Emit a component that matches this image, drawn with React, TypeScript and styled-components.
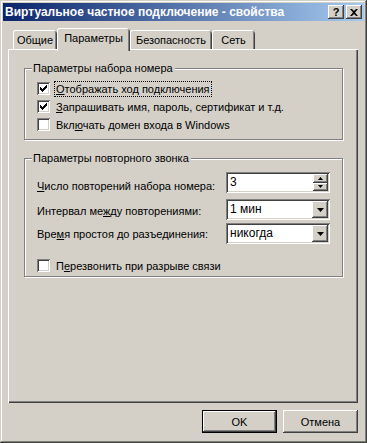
import styled, { createGlobalStyle } from 'styled-components'

const face = '#d4d0c8'
const light = '#ffffff'
const shadow = '#808080'
const dark = '#404040'

const raised = `
	box-shadow: inset -1px -1px ${dark}, inset 1px 1px ${light}, inset -2px -2px ${shadow}, inset 2px 2px ${face};
`
const sunken = `
	box-shadow: inset 1px 1px ${shadow}, inset -1px -1px ${light}, inset 2px 2px ${dark}, inset -2px -2px ${face};
`

const GlobalStyle = createGlobalStyle`
	html, body {
		margin: 0;
		padding: 0;
		background: ${face};
	}
	body {
		font-family: "Liberation Sans", Arial, sans-serif;
		font-size: 11px;
		color: #000;
	}
`

const Window = styled.div`
	width: 367px;
	height: 443px;
	box-sizing: border-box;
	padding: 3px;
	background: ${face};
	box-shadow: inset -1px -1px ${dark}, inset 1px 1px ${face}, inset -2px -2px ${shadow}, inset 2px 2px ${light};
	display: flex;
	flex-direction: column;
`

const TitleBar = styled.div`
	height: 18px;
	display: flex;
	align-items: center;
	padding: 0 2px 0 2px;
	background: linear-gradient(to right, #0a246a, #a6caf0);
`

const TitleText = styled.div`
	flex: 1;
	color: #fff;
	font-weight: bold;
	font-size: 12px;
	white-space: nowrap;
`

const CaptionButton = styled.div<{ $gap?: number }>`
	width: 16px;
	height: 14px;
	box-sizing: border-box;
	margin-left: ${p => p.$gap ?? 0}px;
	background: ${face};
	${raised}
	display: flex;
	align-items: center;
	justify-content: center;
	font-weight: bold;
	font-size: 11px;
	line-height: 14px;
`

const Body = styled.div`
	padding: 7px 6px 0 5px;
	display: flex;
	flex-direction: column;
`

const TabRow = styled.div`
	height: 21px;
	display: flex;
	align-items: flex-end;
	padding-left: 5px;
	position: relative;
	z-index: 1;
`

const Tab = styled.div<{ $width: number; $active?: boolean }>`
	width: ${p => p.$width}px;
	height: ${p => (p.$active ? 23 : 19)}px;
	margin-bottom: ${p => (p.$active ? -2 : 0)}px;
	padding-bottom: ${p => (p.$active ? 4 : 0)}px;
	box-sizing: border-box;
	display: flex;
	align-items: center;
	justify-content: center;
	background: ${face};
	border-radius: 3px 3px 0 0;
	box-shadow: inset 1px 0 ${light}, inset 0 1px ${light}, inset -1px 0 ${dark}, inset -2px 0 ${shadow};
`

const Panel = styled.div`
	height: 354px;
	box-sizing: border-box;
	padding: 19px 15px 0 16px;
	background: ${face};
	box-shadow: inset 1px 1px ${light}, inset -1px -1px ${dark}, inset -2px -2px ${shadow};
`

const Group = styled.div<{ $height: number; $top?: number }>`
	position: relative;
	height: ${p => p.$height}px;
	margin-top: ${p => p.$top ?? 0}px;
	box-sizing: border-box;
	border: 1px solid ${shadow};
	box-shadow: inset 1px 1px ${light}, 1px 1px ${light};
	padding: 13px 12px 0 12px;
`

const Legend = styled.span`
	position: absolute;
	top: -8px;
	left: 7px;
	padding: 0 2px 0 1px;
	line-height: 14px;
	background: ${face};
`

const CheckRow = styled.div<{ $gap?: number }>`
	height: 13px;
	display: flex;
	align-items: center;
	gap: 4px;
	margin-bottom: ${p => p.$gap ?? 5}px;
	white-space: nowrap;
`

const Box = styled.div`
	width: 13px;
	height: 13px;
	flex: none;
	box-sizing: border-box;
	background: #fff;
	${sunken}
	display: flex;
	align-items: center;
	justify-content: center;
`

const Label = styled.span<{ $focus?: boolean }>`
	line-height: 14px;
	padding: 0 1px;
	border: 1px dotted ${p => (p.$focus ? '#000' : 'transparent')};
`

const FieldGrid = styled.div`
	display: grid;
	grid-template-columns: 1fr 104px;
	align-items: center;
	white-space: nowrap;
`

const FieldLabel = styled.span`
	padding-left: 0;
`

const Field = styled.div<{ $gap?: number }>`
	height: 21px;
	margin-bottom: ${p => p.$gap ?? 0}px;
	box-sizing: border-box;
	padding: 2px;
	background: #fff;
	${sunken}
	display: flex;
	align-items: stretch;
`

const FieldValue = styled.div`
	flex: 1;
	padding-left: 2px;
	line-height: 17px;
	font-size: 12px;
`

const DropButton = styled.div`
	width: 16px;
	box-sizing: border-box;
	background: ${face};
	${raised}
	display: flex;
	align-items: center;
	justify-content: center;
`

const SpinColumn = styled.div`
	width: 15px;
	display: flex;
	flex-direction: column;
`

const SpinButton = styled(DropButton)`
	width: 15px;
	flex: 1;
`

const CheckGap = styled.div`
	height: 15px;
`

const Footer = styled.div`
	display: flex;
	justify-content: flex-end;
	gap: 6px;
	margin-top: 7px;
`

const Button = styled.div<{ $default?: boolean }>`
	width: 75px;
	height: 23px;
	box-sizing: border-box;
	display: flex;
	align-items: center;
	justify-content: center;
	background: ${face};
	box-shadow: ${p =>
		p.$default
			? `inset 0 0 0 1px #000, inset -2px -2px ${dark}, inset 2px 2px ${light}, inset -3px -3px ${shadow}, inset 3px 3px ${face}`
			: `inset -1px -1px ${dark}, inset 1px 1px ${light}, inset -2px -2px ${shadow}, inset 2px 2px ${face}`};
`

const Check = () => (
	<svg width="7" height="7" viewBox="0 0 7 7">
		<path d="M0 2h1v1h1v1h1v-1h1v-1h1v-1h1v-1h1v3h-1v1h-1v1h-1v1h-1v1h-1v-1h-1v-1h-1v-1h-1z" fill="#000" />
	</svg>
)

const DownArrow = ({ w = 7 }: { w?: number }) => (
	<svg width={w} height={(w + 1) / 2} viewBox={`0 0 ${w} ${(w + 1) / 2}`}>
		<path d={`M0 0h${w}L${w / 2} ${(w + 1) / 2}z`} fill="#000" />
	</svg>
)

const UpArrow = ({ w = 5 }: { w?: number }) => (
	<svg width={w} height={(w + 1) / 2} viewBox={`0 0 ${w} ${(w + 1) / 2}`}>
		<path d={`M0 ${(w + 1) / 2}h${w}L${w / 2} 0z`} fill="#000" />
	</svg>
)

const CloseGlyph = () => (
	<svg width="8" height="7" viewBox="0 0 8 7">
		<path d="M0 0h2l2 2l2-2h2l-3 3.5l3 3.5h-2l-2-2l-2 2h-2l3-3.5z" fill="#000" />
	</svg>
)

export default function App() {
	return (
		<>
			<GlobalStyle />
			<Window>
				<TitleBar>
					<TitleText>Виртуальное частное подключение - свойства</TitleText>
					<CaptionButton>?</CaptionButton>
					<CaptionButton $gap={2}>
						<CloseGlyph />
					</CaptionButton>
				</TitleBar>
				<Body>
					<TabRow>
						<Tab $width={44}>Общие</Tab>
						<Tab $width={73} $active>Параметры</Tab>
						<Tab $width={82}>Безопасность</Tab>
						<Tab $width={43}>Сеть</Tab>
					</TabRow>
					<Panel>
						<Group $height={72}>
							<Legend>Параметры набора номера</Legend>
							<CheckRow>
								<Box><Check /></Box>
								<Label $focus><u>О</u>тображать ход подключения</Label>
							</CheckRow>
							<CheckRow>
								<Box><Check /></Box>
								<Label><u>З</u>апрашивать имя, пароль, сертификат и т.д.</Label>
							</CheckRow>
							<CheckRow>
								<Box />
								<Label>Вкл<u>ю</u>чать домен входа в Windows</Label>
							</CheckRow>
						</Group>
						<Group $height={119} $top={18}>
							<Legend>Параметры повторного звонка</Legend>
							<FieldGrid>
								<FieldLabel><u>Ч</u>исло повторений набора номера:</FieldLabel>
								<Field $gap={6}>
									<FieldValue>3</FieldValue>
									<SpinColumn>
										<SpinButton><UpArrow /></SpinButton>
										<SpinButton><DownArrow w={5} /></SpinButton>
									</SpinColumn>
								</Field>
								<FieldLabel>Интервал ме<u>ж</u>ду повторениями:</FieldLabel>
								<Field $gap={3}>
									<FieldValue>1 мин</FieldValue>
									<DropButton><DownArrow /></DropButton>
								</Field>
								<FieldLabel>Вре<u>м</u>я простоя до разъединения:</FieldLabel>
								<Field>
									<FieldValue>никогда</FieldValue>
									<DropButton><DownArrow /></DropButton>
								</Field>
							</FieldGrid>
							<CheckGap />
							<CheckRow $gap={0}>
								<Box />
								<Label>П<u>е</u>резвонить при разрыве связи</Label>
							</CheckRow>
						</Group>
					</Panel>
					<Footer>
						<Button $default>OK</Button>
						<Button>Отмена</Button>
					</Footer>
				</Body>
			</Window>
		</>
	)
}
